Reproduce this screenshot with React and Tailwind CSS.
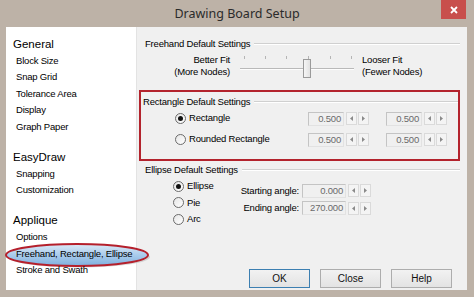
import React from "react";

const F = { fontFamily: '"Liberation Sans", Arial, sans-serif' };

function Radio({ checked }) {
  return (
    <span className="w-[11px] h-[11px] rounded-full border border-[#6b6b6b] bg-gradient-to-br from-[#e6e6e6] to-white flex items-center justify-center shrink-0">
      {checked && <span className="w-[5px] h-[5px] rounded-full bg-[#111]" />}
    </span>
  );
}

function Arrows() {
  return (
    <div className="flex gap-[1px] h-[13px]">
      <div className="w-[11px] h-[13px] border border-[#dadada] bg-[#f4f4f4] flex items-center justify-center">
        <svg width="3" height="5" viewBox="0 0 3 5"><path d="M3 0 L0 2.5 L3 5 Z" fill="#8a8a8a" /></svg>
      </div>
      <div className="w-[11px] h-[13px] border border-[#dadada] bg-[#f4f4f4] flex items-center justify-center">
        <svg width="3" height="5" viewBox="0 0 3 5"><path d="M0 0 L3 2.5 L0 5 Z" fill="#8a8a8a" /></svg>
      </div>
    </div>
  );
}

function Spin({ value, w = 36 }) {
  return (
    <div className="flex items-center gap-[2px]">
      <div
        className={`${w === 36 ? "w-[36px]" : "w-[44px]"} h-[14px] border border-[#c4c4c4] border-b-[#e2e2e2] border-r-[#e2e2e2] bg-[#f0f0f0] text-[#6a6a6a] text-right pr-[2px] leading-[12px]`}
      >
        {value}
      </div>
      <Arrows />
    </div>
  );
}

function GroupHead({ title }) {
  return (
    <div className="h-[13px] flex items-center">
      <span className="leading-[13px] whitespace-nowrap">{title}</span>
      <div className="flex-1 ml-[4px] border-t border-[#d0d0d0] border-b border-b-white" />
    </div>
  );
}

function Btn({ children, def }) {
  return (
    <div
      className={`w-[61px] h-[19px] flex items-center justify-center border ${def ? "border-[#3c7fb1]" : "border-[#adadad]"} bg-gradient-to-b from-[#f2f2f2] to-[#e3e3e3] text-[#111]`}
    >
      {children}
    </div>
  );
}

export default function App() {
  const item = "h-[16.5px] flex items-center pl-[10px] text-[9.5px] tracking-[-0.2px] relative z-10";
  const head = "h-[16.5px] flex items-center pl-[7px] text-[11.5px] relative z-10";
  return (
    <div className="w-[474px] h-[297px] bg-[#bdb2a7] flex flex-col overflow-hidden text-black" style={F}>
      <div className="h-[27px] relative flex items-center justify-center">
        <span className="text-[12.5px] text-[#2b2b2b] pt-[1px]" style={{ fontFamily: '"Noto Sans", "Liberation Sans", sans-serif' }}>
          Drawing Board Setup
        </span>
        <div className="absolute top-0 right-[8px] w-[25px] h-[19px] bg-[#c84f4c] flex items-center justify-center">
          <svg width="8" height="8" viewBox="0 0 8 8">
            <path d="M1 1 L7 7 M7 1 L1 7" stroke="white" strokeWidth="1.8" />
          </svg>
        </div>
      </div>

      <div className="flex-1 flex ml-[6px] mr-[7px] mb-[7px] relative">
        {/* left nav */}
        <div className="w-[131px] bg-white border-r border-[#e3e3e3] pt-[9px] flex flex-col">
          <div className={head}>General</div>
          <div className={item}>Block Size</div>
          <div className={item}>Snap Grid</div>
          <div className={item}>Tolerance Area</div>
          <div className={item}>Display</div>
          <div className={item}>Graph Paper</div>
          <div className="h-[14px]" />
          <div className={head}>EasyDraw</div>
          <div className={item}>Snapping</div>
          <div className={item}>Customization</div>
          <div className="h-[14px]" />
          <div className={head}>Applique</div>
          <div className={item}>Options</div>
          <div className={item}>Freehand, Rectangle, Ellipse</div>
          <div className={item}>Stroke and Swath</div>
        </div>

        {/* selection highlight with red annotation ellipse */}
        <svg className="absolute left-[-2px] top-[214px]" width="148" height="28" viewBox="0 0 148 28">
          <defs>
            <linearGradient id="sel" x1="0" y1="0" x2="0" y2="1">
              <stop offset="0" stopColor="#dceaf7" />
              <stop offset="0.5" stopColor="#a9cbec" />
              <stop offset="1" stopColor="#7fb0de" />
            </linearGradient>
          </defs>
          <ellipse cx="75" cy="16" rx="71" ry="10.5" fill="#9a9a9a" opacity="0.35" />
          <ellipse cx="73" cy="14" rx="71" ry="11" fill="url(#sel)" />
          <ellipse cx="73" cy="14" rx="71" ry="11" fill="none" stroke="#b5202c" strokeWidth="2" />
        </svg>

        {/* right panel */}
        <div className="flex-1 bg-[#f0f0f0] flex flex-col text-[9.5px] tracking-[-0.2px]">
          <div className="pl-[8px] pr-[7px] pt-[10px]">
            <GroupHead title="Freehand Default Settings" />
            <div className="flex mt-[4px] h-[26px]">
              <div className="w-[85px] text-right leading-[12px]">
                <div>Better Fit</div>
                <div>(More Nodes)</div>
              </div>
              <div className="relative w-[114px] h-[26px] ml-[10px]">
                {[4, 25, 46, 68, 90, 111].map((x) => (
                  <div key={x} className="absolute top-[2px] w-[1px] h-[3px] bg-[#b5b5b5]" style={{ left: x }} />
                ))}
                <div className="absolute top-[14px] left-0 right-0 h-[1px] bg-[#b9b9b9]" />
                <div className="absolute top-[15px] left-0 right-0 h-[1px] bg-[#fdfdfd]" />
                <div className="absolute top-[5px] left-[63px] w-[8px] h-[19px] border border-[#9a9a9a] bg-gradient-to-r from-[#f6f6f6] to-[#e2e2e2]" />
              </div>
              <div className="ml-[8px] leading-[12px]">
                <div>Looser Fit</div>
                <div>(Fewer Nodes)</div>
              </div>
            </div>
          </div>

          <div className="mt-[10px] ml-[2px] mr-[7px] h-[71px] border-2 border-[#b3232d] pl-[2px] pt-[3px]">
            <GroupHead title="Rectangle Default Settings" />
            <div className="flex items-center h-[15px] mt-[3px]">
              <div className="w-[165px] pl-[32px] flex items-center gap-[3px]">
                <Radio checked />
                <span>Rectangle</span>
              </div>
              <Spin value="0.500" />
              <div className="w-[17px]" />
              <Spin value="0.500" />
            </div>
            <div className="flex items-center h-[15px] mt-[6px]">
              <div className="w-[165px] pl-[32px] flex items-center gap-[3px]">
                <Radio />
                <span>Rounded Rectangle</span>
              </div>
              <Spin value="0.500" />
              <div className="w-[17px]" />
              <Spin value="0.500" />
            </div>
          </div>

          <div className="pl-[8px] pr-[7px] mt-[2px]">
            <GroupHead title="Ellipse Default Settings" />
            <div className="flex mt-[2px]">
              <div className="w-[84px] pl-[28px] flex flex-col">
                <div className="h-[16.5px] flex items-center gap-[3px]"><Radio checked /><span>Ellipse</span></div>
                <div className="h-[16.5px] flex items-center gap-[3px]"><Radio /><span>Pie</span></div>
                <div className="h-[16.5px] flex items-center gap-[3px]"><Radio /><span>Arc</span></div>
              </div>
              <div className="flex flex-col mt-[4px]">
                <div className="h-[17.5px] flex items-center">
                  <span className="w-[73px] text-right pr-[3px]">Starting angle:</span>
                  <Spin value="0.000" w={44} />
                </div>
                <div className="h-[17.5px] flex items-center">
                  <span className="w-[73px] text-right pr-[3px]">Ending angle:</span>
                  <Spin value="270.000" w={44} />
                </div>
              </div>
            </div>
          </div>

          <div className="mt-auto mb-[2px] flex justify-end gap-[10px] pr-[15px] text-[10px] tracking-normal">
            <Btn def>OK</Btn>
            <Btn>Close</Btn>
            <Btn>Help</Btn>
          </div>
        </div>
      </div>
    </div>
  );
}
